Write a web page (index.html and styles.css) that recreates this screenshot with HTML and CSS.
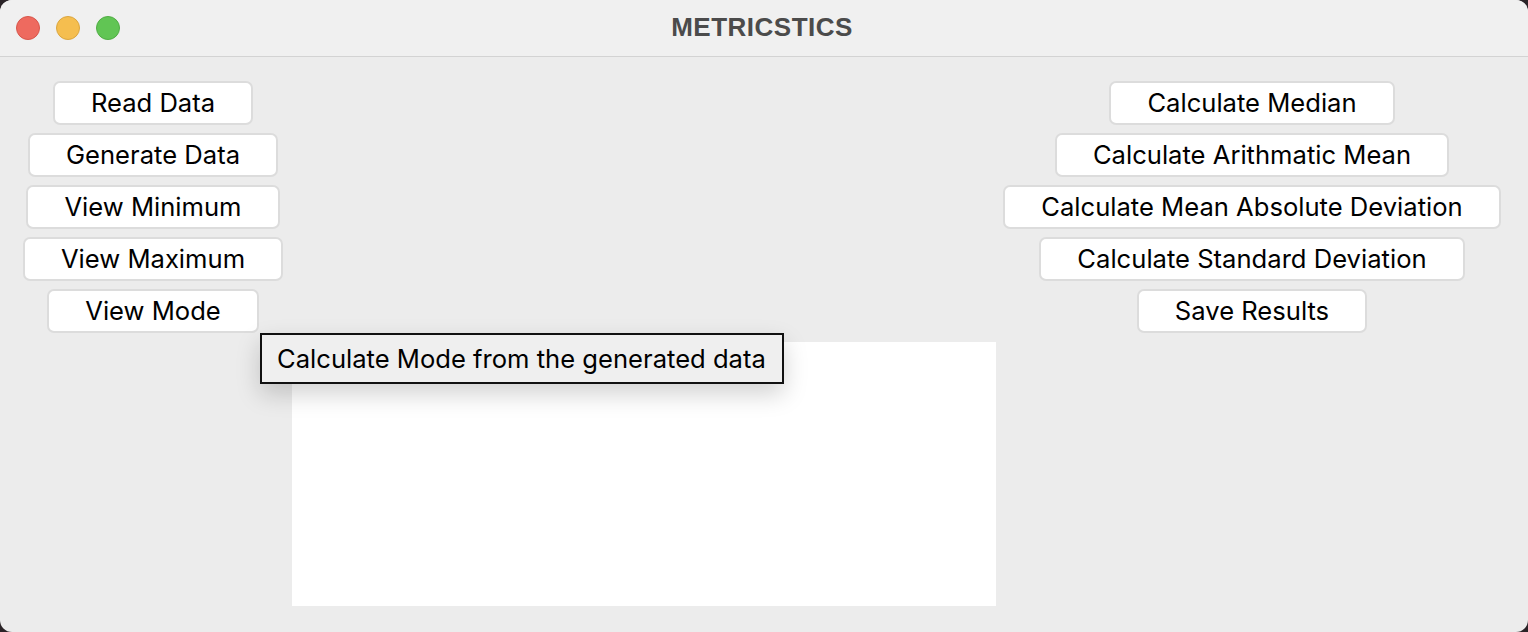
FILE: index.html
```html
<!DOCTYPE html>
<html>
<head>
<meta charset="utf-8">
<link rel="stylesheet" href="styles.css">
</head>
<body>
<div class="window">
  <div class="titlebar">
    <div class="lights">
      <span class="light red"></span>
      <span class="light yellow"></span>
      <span class="light green"></span>
    </div>
    <div class="title">METRICSTICS</div>
  </div>
  <div class="main">
    <div class="col left">
      <button class="btn">Read Data</button>
      <button class="btn">Generate Data</button>
      <button class="btn">View Minimum</button>
      <button class="btn">View Maximum</button>
      <button class="btn">View Mode</button>
    </div>
    <div class="spacer"></div>
    <div class="col right">
      <button class="btn">Calculate Median</button>
      <button class="btn">Calculate Arithmatic Mean</button>
      <button class="btn">Calculate Mean Absolute Deviation</button>
      <button class="btn">Calculate Standard Deviation</button>
      <button class="btn">Save Results</button>
    </div>
    <div class="canvas"></div>
  </div>
  <div class="tooltip">Calculate Mode from the generated data</div>
</div>
</body>
</html>
```
FILE: styles.css
```css
html, body {
  margin: 0;
  padding: 0;
  background: #2a2327;
  width: 1528px;
  height: 632px;
  overflow: hidden;
}
.window {
  position: relative;
  width: 1528px;
  height: 632px;
  background: #ececec;
  border-radius: 12px;
  overflow: hidden;
  font-family: "Inter", "Liberation Sans", sans-serif;
}
.titlebar {
  position: relative;
  height: 56px;
  background: #f0f0f0;
  border-bottom: 1px solid #d3d3d3;
  display: flex;
  align-items: center;
  justify-content: center;
}
.lights {
  position: absolute;
  left: 16px;
  top: 16px;
  display: flex;
  gap: 16px;
}
.light {
  width: 22px;
  height: 22px;
  border-radius: 50%;
  display: block;
}
.red { background: #ee6a5f; border: 1px solid #d8564b; }
.yellow { background: #f5be4f; border: 1px solid #dba63f; }
.green { background: #61c554; border: 1px solid #50ad44; }
.title {
  font-family: "Liberation Sans", sans-serif;
  font-weight: bold;
  font-size: 26px;
  color: #4b4b4b;
  letter-spacing: 0.5px;
  margin-top: -2px;
  margin-right: 4px;
}
.main {
  display: grid;
  grid-template-columns: 292px 704px 1fr;
  grid-template-rows: auto auto;
  padding-top: 24px;
}
.col {
  display: flex;
  flex-direction: column;
  align-items: center;
  gap: 8px;
}
.left {
  grid-column: 1;
  grid-row: 1;
  padding-left: 14px;
}
.spacer { grid-column: 2; grid-row: 1; }
.right {
  grid-column: 3;
  grid-row: 1;
  padding-right: 20px;
}
.btn {
  height: 44px;
  padding: 0 36px;
  background: #ffffff;
  border: 2px solid #dcdcdc;
  border-radius: 7px;
  font-family: "Inter", "Liberation Sans", sans-serif;
  font-size: 25.6px;
  color: #000;
  line-height: 1;
}
.canvas {
  grid-column: 2;
  grid-row: 2;
  margin-top: 9px;
  height: 264px;
  background: #ffffff;
}
.tooltip {
  position: absolute;
  left: 260px;
  top: 333px;
  box-sizing: border-box;
  width: 524px;
  height: 51px;
  border: 2px solid #111;
  background: #efefef;
  font-size: 25.6px;
  color: #000;
  display: flex;
  align-items: center;
  padding-left: 15px;
  box-shadow: 0 10px 24px rgba(0,0,0,0.18);
}
```
